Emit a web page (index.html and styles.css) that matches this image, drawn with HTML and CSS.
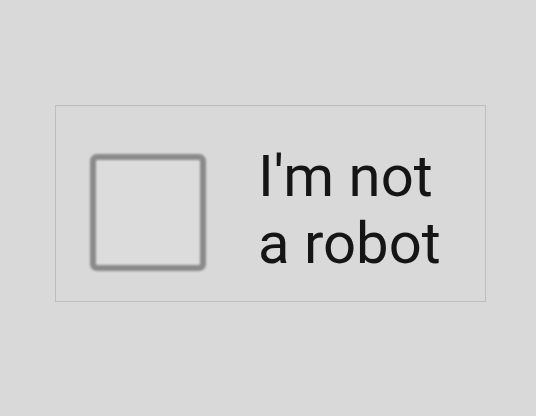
FILE: index.html
```html
<!DOCTYPE html>
<html>
<head>
<meta charset="utf-8">
<link rel="stylesheet" href="styles.css">
</head>
<body>
<div class="page">
  <div class="card">
    <div class="check"></div>
    <div class="label">I'm not<br>a robot</div>
  </div>
</div>
</body>
</html>
```
FILE: styles.css
```css
html, body {
  margin: 0;
  padding: 0;
  background: #d9d9d9;
}
.page {
  width: 536px;
  height: 416px;
  padding: 105px 0 0 55px;
  box-sizing: border-box;
}
.card {
  width: 431px;
  height: 197px;
  box-sizing: border-box;
  border: 1px solid #bdbdbd;
  background: #d9d9d9;
  display: flex;
  align-items: flex-start;
  padding: 48px 0 0 34px;
}
.check {
  width: 116px;
  height: 117px;
  box-sizing: border-box;
  border: 6px solid #8a8a8a;
  border-radius: 7px;
  background: #dcdcdc;
  filter: blur(1px);
  flex: none;
}
.label {
  margin-left: 52px;
  font-family: Roboto, sans-serif;
  font-size: 58px;
  line-height: 67px;
  color: #151515;
  margin-top: -11px;
}
```
